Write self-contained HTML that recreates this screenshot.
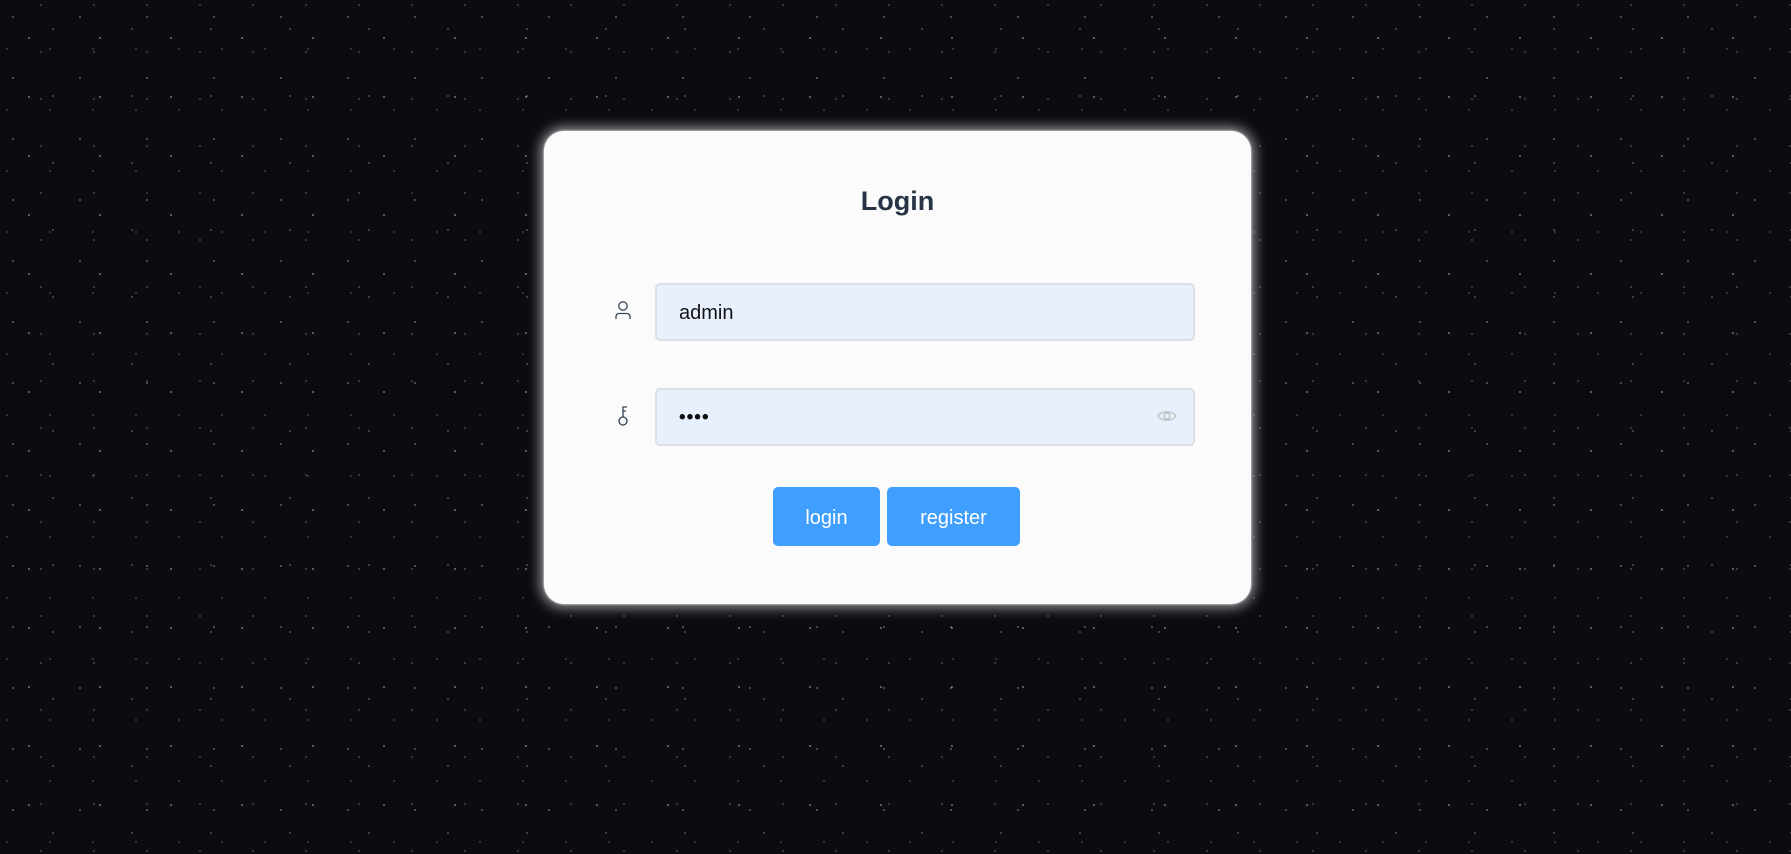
<!DOCTYPE html>
<html><head><meta charset="utf-8"><style>
html,body{margin:0;width:1791px;height:854px;overflow:hidden}
body{background-color:#0c0b12;
background-image:
radial-gradient(1px 1px at 13px 17px,#8a8fa0 50%,transparent 100%),
radial-gradient(1px 1px at 41px 5px,#666a78 50%,transparent 100%),
radial-gradient(1.2px 1px at 29px 38px,#9aa0b0 50%,transparent 100%),
radial-gradient(1px 1px at 7px 49px,#5a5e6c 50%,transparent 100%),
radial-gradient(1px 1px at 53px 29px,#777b8a 50%,transparent 100%),
radial-gradient(1px 1px at 61px 57px,#555866 50%,transparent 100%);
background-size:67px 61px,53px 47px,71px 59px,43px 61px,79px 67px,37px 41px;
font-family:"Liberation Sans",Arial,sans-serif;position:relative}
.card{position:absolute;left:544px;top:131px;width:707px;height:473px;background:#fbfbfc;border-radius:20px;box-shadow:0 0 12px 4px rgba(255,255,255,.55),0 0 2px #fff;box-sizing:border-box}
h1{position:absolute;left:0;right:0;top:55px;margin:0;text-align:center;font-size:27px;font-weight:bold;color:#263445}
.inp{position:absolute;left:111px;width:540px;height:58px;box-sizing:border-box;background:#e8f0fe;border:2px solid #dcdfe6;border-radius:5px;font-size:20px;color:#111;padding-left:22px;line-height:56px}
.ico{position:absolute;left:70px}
.btn{position:absolute;top:356px;height:59px;background:#409eff;color:#fff;border-radius:5px;font-size:20px;text-align:center;line-height:62px}
</style></head><body>
<div class="card">
<h1>Login</h1>
<svg class="ico" style="top:169px" width="18" height="20" viewBox="0 0 18 20"><circle cx="9" cy="6" r="4.2" fill="none" stroke="#345" stroke-width="1.3"/><path d="M2 19v-2.5a3 3 0 0 1 3-3h8a3 3 0 0 1 3 3V19" fill="none" stroke="#345" stroke-width="1.3"/></svg>
<div class="inp" style="top:152px">admin</div>
<svg class="ico" style="top:274px" width="18" height="22" viewBox="0 0 18 22"><circle cx="9" cy="16" r="4" fill="none" stroke="#345" stroke-width="1.3"/><path d="M9 12V2h4M9 6h3" fill="none" stroke="#345" stroke-width="1.3"/></svg>
<div class="inp" style="top:257px;letter-spacing:1px;font-size:19px;font-weight:bold">••••</div>
<svg style="position:absolute;left:613px;top:277px" width="20" height="16" viewBox="0 0 20 16"><path d="M1 8C4 2.5 16 2.5 19 8 16 13.5 4 13.5 1 8z" fill="none" stroke="#bbb" stroke-width="1.3"/><circle cx="10" cy="8" r="3" fill="none" stroke="#bbb" stroke-width="1.3"/></svg>
<div class="btn" style="left:229px;width:107px">login</div>
<div class="btn" style="left:343px;width:133px">register</div>
</div>
</body></html>
